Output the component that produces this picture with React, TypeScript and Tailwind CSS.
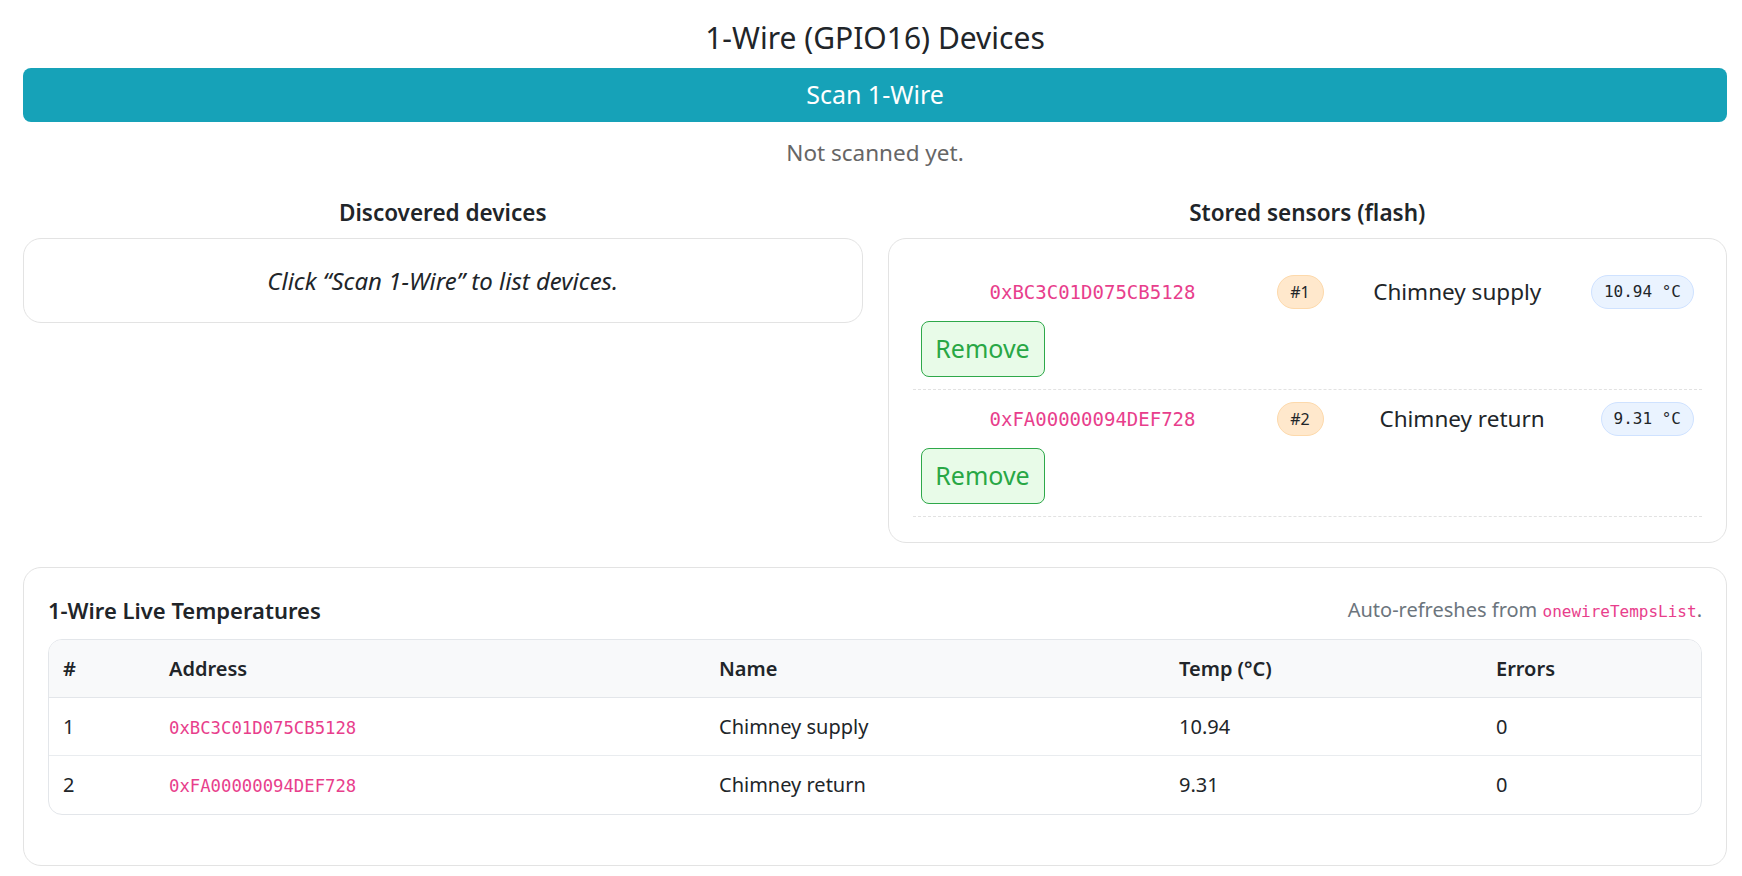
import React from 'react';

const sensors = [
  { addr: '0xBC3C01D075CB5128', idx: 1, name: 'Chimney supply', temp: '10.94 °C', t: '10.94', err: 0 },
  { addr: '0xFA00000094DEF728', idx: 2, name: 'Chimney return', temp: '9.31 °C', t: '9.31', err: 0 },
];

const sans = "font-['Noto_Sans','Open_Sans',sans-serif]";
const mono = "font-['DejaVu_Sans_Mono','Liberation_Mono',monospace]";

function StoredRow({ s }: { s: (typeof sensors)[number] }) {
  return (
    <div className="border-b border-dashed border-[#e2e2e2] px-2 py-3">
      <div className="flex h-[34px] items-center gap-3">
        <code className={`${mono} w-[344px] text-center text-[19px] text-[#e83e8c]`}>{s.addr}</code>
        <span className="flex h-[34px] w-[47px] items-center justify-center rounded-full border border-[#fdd9ab] bg-[#ffe8cc] text-[16px] text-[#212529]">
          #{s.idx}
        </span>
        <span className="flex-1 text-center text-[22.5px] text-[#212529]">{s.name}</span>
        <span className={`${mono} flex h-[34px] items-center rounded-full border border-[#cfe2ff] bg-[#eaf3ff] px-3 text-[16px] text-[#212529]`}>
          {s.temp}
        </span>
      </div>
      <button className="mt-3 h-[56px] w-[124px] rounded-lg border border-[#2ea84a] bg-[#e8fbe8] text-[25px] text-[#28a745]">
        Remove
      </button>
    </div>
  );
}

export default function App() {
  const cols = 'grid grid-cols-[106px_550px_460px_317px_1fr] items-center';
  return (
    <div className={`${sans} min-h-screen bg-white pl-[23px] pr-[15px] pt-[22px] text-[#212529]`}>
      {/* Header */}
      <h1 className="mb-[14px] h-[32px] text-center text-[30px] leading-[32px]">1-Wire (GPIO16) Devices</h1>
      <button className="h-[54px] w-full rounded-lg bg-[#16a2b8] text-[25px] text-white">Scan 1-Wire</button>
      <p className="mt-[16px] mb-[30px] h-[30px] text-center text-[22.5px] leading-[30px] text-[#666]">Not scanned yet.</p>

      {/* Two columns */}
      <div className="grid grid-cols-2 items-start gap-[25px]">
        <div>
          <h3 className="mb-[10px] h-[30px] text-center text-[22.5px] font-semibold leading-[30px]">Discovered devices</h3>
          <div className="flex h-[85px] items-center justify-center rounded-[18px] border border-[#e3e3e3]">
            <em className="text-[24px]">Click “Scan 1-Wire” to list devices.</em>
          </div>
        </div>
        <div>
          <h3 className="mb-[10px] h-[30px] text-center text-[22.5px] font-semibold leading-[30px]">Stored sensors (flash)</h3>
          <div className="rounded-[18px] border border-[#e3e3e3] px-6 pt-6 pb-[25px]">
            {sensors.map((s) => (
              <StoredRow key={s.addr} s={s} />
            ))}
          </div>
        </div>
      </div>

      {/* Live temps */}
      <div className="mt-6 rounded-[18px] border border-[#e3e3e3] px-6 pt-[24px] pb-[50px]">
        <div className="mb-[11px] flex h-[36px] items-center justify-between">
          <h3 className="text-[22px] font-semibold">1-Wire Live Temperatures</h3>
          <span className="text-[20px] text-[#6c757d]">
            Auto-refreshes from <code className={`${mono} text-[16px] text-[#e83e8c]`}>onewireTempsList</code>.
          </span>
        </div>
        <div className="overflow-hidden rounded-[14px] border border-[#e3e6ea] text-[20px]">
          <div className={`${cols} h-[58px] border-b border-[#e3e6ea] bg-[#f8f9fa] font-semibold`}>
            <div className="pl-[14px]">#</div>
            <div className="pl-[14px]">Address</div>
            <div className="pl-[14px]">Name</div>
            <div className="pl-[14px]">Temp (°C)</div>
            <div className="pl-[14px]">Errors</div>
          </div>
          {sensors.map((s, i) => (
            <div key={s.addr} className={`${cols} h-[58px] ${i === 0 ? 'border-b border-[#e9ecef]' : ''}`}>
              <div className="pl-[14px]">{s.idx}</div>
              <div className="pl-[14px]">
                <code className={`${mono} text-[17.3px] text-[#e83e8c]`}>{s.addr}</code>
              </div>
              <div className="pl-[14px]">{s.name}</div>
              <div className="pl-[14px]">{s.t}</div>
              <div className="pl-[14px]">{s.err}</div>
            </div>
          ))}
        </div>
      </div>
    </div>
  );
}
